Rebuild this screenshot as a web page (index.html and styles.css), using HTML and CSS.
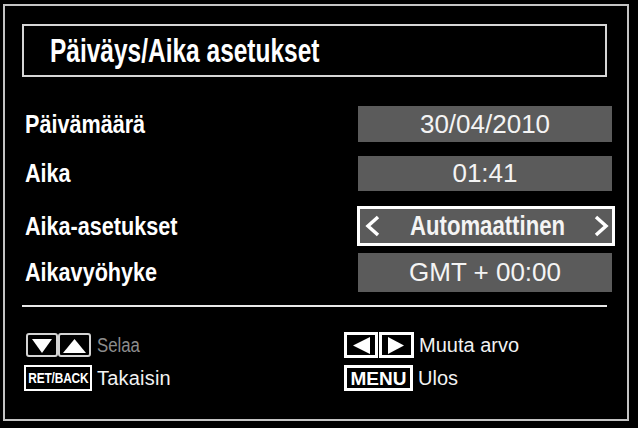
FILE: index.html
```html
<!DOCTYPE html>
<html lang="fi">
<head>
<meta charset="utf-8">
<title>Päiväys/Aika asetukset</title>
<link rel="stylesheet" href="styles.css">
</head>
<body>
<div class="frame">
  <div class="title"><span class="titletext">Päiväys/Aika asetukset</span></div>
  <div class="rows">
    <div class="row r1">
      <span class="label">Päivämäärä</span>
      <span class="val">30/04/2010</span>
    </div>
    <div class="row r2">
      <span class="label">Aika</span>
      <span class="val">01:41</span>
    </div>
    <div class="row r3">
      <span class="label">Aika-asetukset</span>
      <span class="val sel">
        <svg class="chev" width="18" height="22" viewBox="0 0 18 22"><polyline points="14,2 4,11 14,20" fill="none" stroke="#fff" stroke-width="3.5" stroke-linejoin="miter"/></svg>
        <span class="seltext">Automaattinen</span>
        <svg class="chev" width="18" height="22" viewBox="0 0 18 22"><polyline points="4,2 14,11 4,20" fill="none" stroke="#fff" stroke-width="3.5" stroke-linejoin="miter"/></svg>
      </span>
    </div>
    <div class="row r4">
      <span class="label">Aikavyöhyke</span>
      <span class="val">GMT + 00:00</span>
    </div>
  </div>
  <div class="sep"></div>
  <div class="legend">
    <div class="item">
      <svg class="keys" width="68" height="25" viewBox="0 0 68 25">
        <rect x="3" y="1" width="30" height="22" rx="2" fill="none" stroke="#d4d4d4" stroke-width="2"/>
        <rect x="35" y="1" width="31" height="22" rx="2" fill="none" stroke="#d4d4d4" stroke-width="2"/>
        <polygon points="8,6 28,6 18,20" fill="#fff"/>
        <polygon points="39,20 62,20 50.5,6" fill="#fff"/>
      </svg>
      <span class="ltext dim">Selaa</span>
    </div>
    <div class="item">
      <svg class="keys" width="70" height="26" viewBox="0 0 70 26">
        <rect x="1.5" y="1.5" width="31" height="23" fill="none" stroke="#fff" stroke-width="3"/>
        <rect x="36.5" y="1.5" width="32" height="23" fill="none" stroke="#fff" stroke-width="3"/>
        <polygon points="9,13.5 26,5 26,22" fill="#fff"/>
        <polygon points="44,5 44,22 60,13.5" fill="#fff"/>
      </svg>
      <span class="ltext">Muuta arvo</span>
    </div>
    <div class="item">
      <span class="keybox ret"><span class="rettext">RET/BACK</span></span>
      <span class="ltext wide">Takaisin</span>
    </div>
    <div class="item">
      <span class="keybox menu">MENU</span>
      <span class="ltext">Ulos</span>
    </div>
  </div>
</div>
</body>
</html>
```
FILE: styles.css
```css
html, body {
  margin: 0;
  padding: 0;
  background: #000;
}
body {
  width: 638px;
  height: 428px;
  overflow: hidden;
  font-family: "Liberation Sans", Arial, sans-serif;
  color: #fff;
}
.frame {
  box-sizing: border-box;
  margin: 4px 0 0 3px;
  width: 626px;
  height: 417px;
  border: 2px solid #c4c4c4;
  padding: 18px 20px 0 17px;
}
.title {
  box-sizing: border-box;
  height: 53px;
  border: 2px solid #d6d6d6;
  display: flex;
  align-items: center;
  padding-left: 26px;
  padding-bottom: 1px;
}
.titletext {
  display: inline-block;
  font-weight: bold;
  font-size: 34px;
  transform: scaleX(0.72);
  transform-origin: left center;
  white-space: nowrap;
}
.rows {
  margin: 29px -8px 0 3px;
}
.row {
  display: flex;
  align-items: center;
  justify-content: space-between;
}
.r1 { height: 36px; }
.r2 { height: 35px; margin-top: 14px; }
.r3 { height: 40px; margin-top: 15px; }
.r4 { height: 39px; margin-top: 7px; }
.label {
  display: inline-block;
  font-weight: bold;
  font-size: 26.5px;
  transform: scaleX(0.815);
  transform-origin: left center;
  white-space: nowrap;
}
.val {
  box-sizing: border-box;
  width: 254px;
  margin-right: 3px;
  height: 100%;
  background: #5b5b5b;
  display: flex;
  align-items: center;
  justify-content: center;
  font-size: 26px;
  color: #f4f4f4;
}
.val.sel {
  display: grid;
  grid-template-columns: 18px 1fr 18px;
  align-items: center;
  border: 3px solid #fff;
  padding: 0 2px 0 4px;
  width: 258px;
  margin-right: 0;
}
.seltext {
  justify-self: center;
  display: inline-block;
  font-weight: bold;
  font-size: 27px;
  transform: scaleX(0.82);
  transform-origin: center center;
  white-space: nowrap;
}
.chev {
  display: block;
}
.sep {
  height: 2px;
  background: #e8e8e8;
  margin-top: 13px;
}
.legend {
  margin: 25px 0 0 2px;
  display: grid;
  grid-template-columns: 320px auto;
  row-gap: 7px;
}
.item {
  display: flex;
  align-items: center;
  gap: 5px;
  height: 26px;
}
.keys {
  display: block;
}
.ltext {
  display: inline-block;
  font-size: 20px;
  color: #f2f2f2;
  white-space: nowrap;
}
.ltext.dim {
  color: #8c8c8c;
  transform: scaleX(0.84);
  transform-origin: left center;
}
.ltext.wide {
  letter-spacing: 0.2px;
}
.keybox {
  box-sizing: border-box;
  width: 68px;
  height: 26px;
  border: 2px solid #fff;
  display: flex;
  align-items: center;
  justify-content: center;
  font-weight: bold;
  color: #fff;
  line-height: 1;
}
.rettext {
  display: inline-block;
  font-size: 14px;
  transform: scaleX(0.85);
  white-space: nowrap;
  letter-spacing: -0.2px;
}
.keybox.menu {
  width: 69px;
  font-size: 19px;
  border-width: 3px;
}
```
